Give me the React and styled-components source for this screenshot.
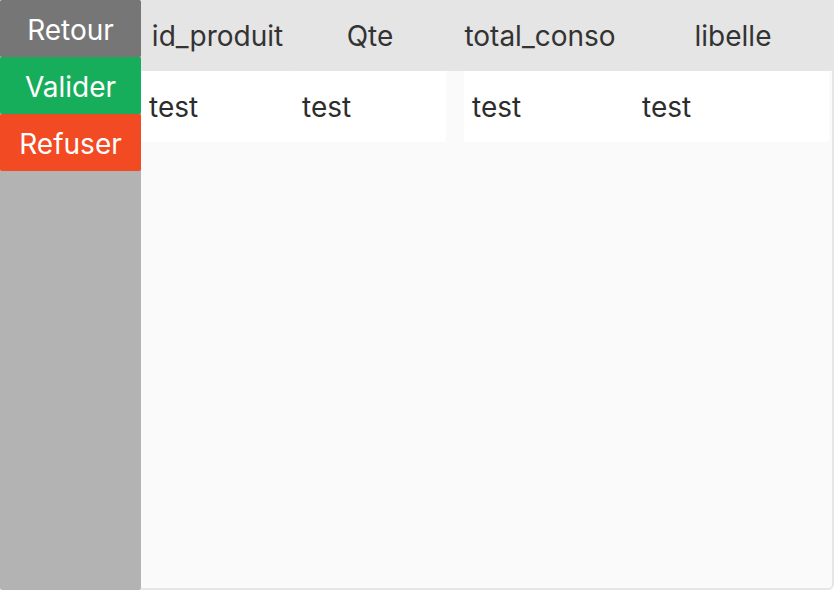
import styled, { createGlobalStyle } from "styled-components"

const Global = createGlobalStyle`
  html, body { margin: 0; padding: 0; background: #ffffff; }
  body { font-family: Inter, "Noto Sans", sans-serif; }
`

const Page = styled.div`
  display: flex;
  width: 834px;
  height: 590px;
`

const Sidebar = styled.div`
  display: flex;
  flex-direction: column;
  width: 142px;
  background: #b3b3b3;
  border-radius: 2px;
`

const SideButton = styled.button`
  height: 57px;
  border: none;
  border-radius: 2px;
  background: ${p => p.color};
  color: #ffffff;
  font-family: Inter, sans-serif;
  font-size: 28px;
  padding: 2px 0 0;
`

const Main = styled.div`
  flex: 1;
  display: flex;
  flex-direction: column;
  background: #fafafa;
  border-right: 2px solid #e6e6e6;
  border-bottom: 2px solid #e6e6e6;
  border-bottom-right-radius: 6px;
`

const Row = styled.div`
  display: grid;
  grid-template-columns: 153px 152px 188px 198px;
  height: 71px;
`

const HeadCell = styled.div`
  display: flex;
  align-items: center;
  justify-content: center;
  background: #e5e5e5;
  color: #333333;
  font-size: 28px;
  padding-top: 1px;
  border-radius: 1px;
`

const DataCell = styled.div`
  display: flex;
  align-items: center;
  background: #ffffff;
  color: #2d2d2d;
  font-size: 28px;
  padding-left: ${p => p.$pad || 8}px;
  margin-right: ${p => p.$mr || 0}px;
  border-radius: 2px;
`

function App() {
  return <Page>
    <Global />
    <Sidebar>
      <SideButton color="#767676">Retour</SideButton>
      <SideButton color="#17ae5b">Valider</SideButton>
      <SideButton color="#f24a22">Refuser</SideButton>
    </Sidebar>
    <Main>
      <Row>
        <HeadCell>id_produit</HeadCell>
        <HeadCell>Qte</HeadCell>
        <HeadCell>total_conso</HeadCell>
        <HeadCell>libelle</HeadCell>
      </Row>
      <Row>
        <DataCell>test</DataCell>
        <DataCell>test</DataCell>
        <DataCell $pad={26} style={{ background: "linear-gradient(to right, #fafafa 18px, #ffffff 18px)" }}>test</DataCell>
        <DataCell $mr={3}>test</DataCell>
      </Row>
    </Main>
  </Page>
}

export default App
